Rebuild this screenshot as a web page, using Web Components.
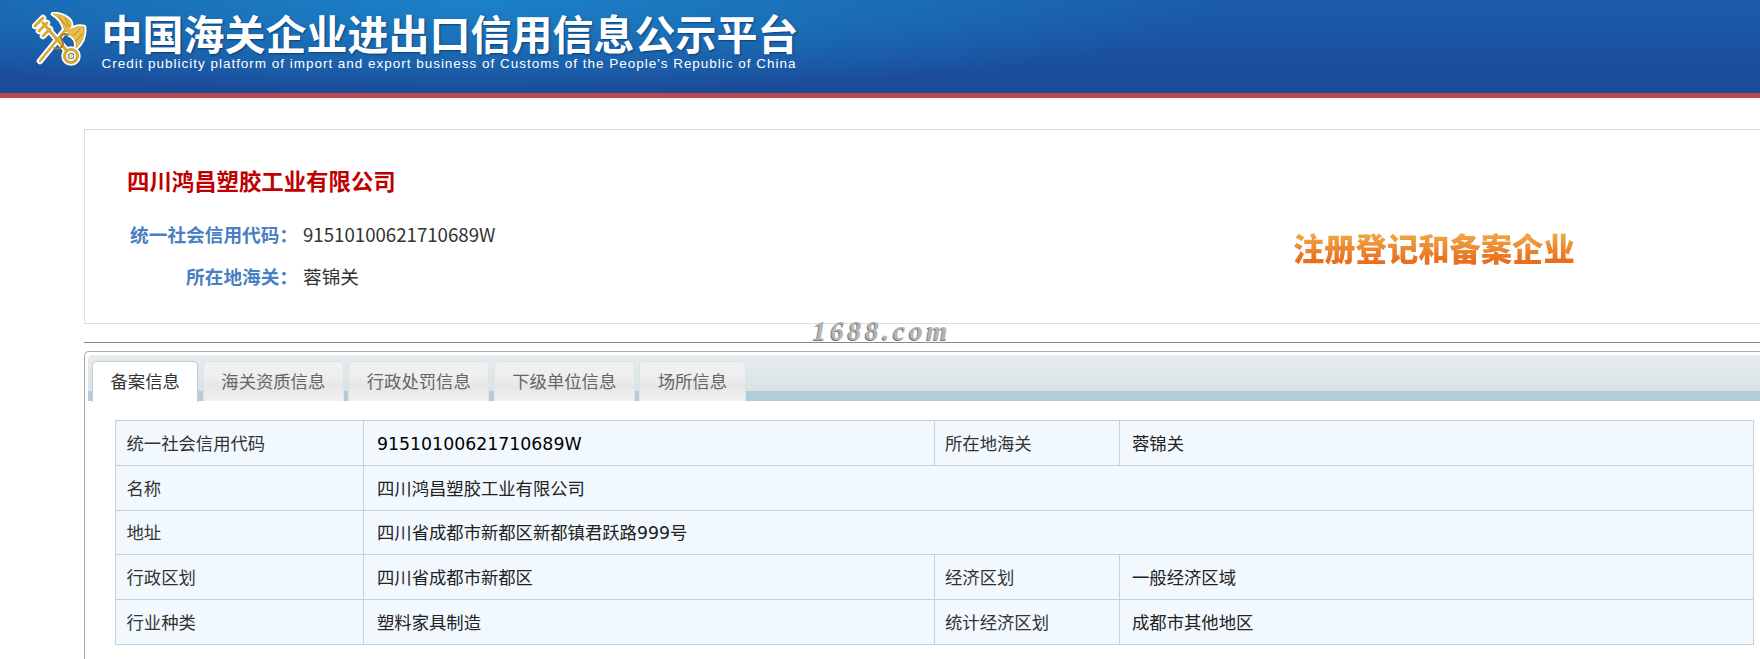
<!DOCTYPE html>
<html lang="zh">
<head>
<meta charset="utf-8">
<title>中国海关企业进出口信用信息公示平台</title>
<style>
  html, body { margin: 0; height: 659px; overflow: hidden; background: #fff; }
  body { font-family: "DejaVu Sans", "Noto Sans CJK SC", sans-serif; }
</style>
</head>
<body>
<site-header></site-header>
<main-area>
  <company-card name="四川鸿昌塑胶工业有限公司" code="91510100621710689W" customs="蓉锦关" status="注册登记和备案企业"></company-card>
  <tab-panel tabs="备案信息,海关资质信息,行政处罚信息,下级单位信息,场所信息">
    <info-table></info-table>
  </tab-panel>
</main-area>

<script>
class SiteHeader extends HTMLElement {
  constructor() {
    super();
    this.attachShadow({ mode: "open" });
    this.shadowRoot.innerHTML = `
      <style>
        :host { display: block; }
        .bar {
          height: 93px;
          box-sizing: border-box;
          display: flex;
          align-items: flex-start;
          padding: 12px 0 0 32px;
          background:
            radial-gradient(ellipse 760px 95px at 470px 0, #1b82c8 0%, rgba(27,120,190,.75) 45%, rgba(27,80,160,0) 100%),
            linear-gradient(#1a5cab, #1b4a98);
        }
        .red { height: 5px; background: #b94a50; }
        svg { width: 56px; height: 56px; flex: none; }
        .titles { margin-left: 13.5px; color: #fff; }
        h1 {
          margin: 0;
          font: 700 41px/41px "Noto Sans CJK SC", sans-serif;
          white-space: nowrap;
          text-shadow: 1px 1px 2px rgba(10,40,90,.7);
        }
        p {
          margin: 4px 0 0;
          font: 13.5px/14px "Liberation Sans", sans-serif;
          letter-spacing: .98px;
          white-space: nowrap;
        }
      </style>
      <div class="bar">
        <svg viewBox="0 0 56 56" fill="none" stroke-linecap="round" stroke-linejoin="round">
          <defs>
            <path id="key" d="M11 11 L35 39"/>
            <path id="teeth" d="M3 14 L11 6 M7 19 L15 11 M11 24 L18 17"/>
            <path id="staff" d="M8 49 L34 17"/>
            <path id="wingl" d="M33 19 C31 11 27 5 21 2 C27 2 34 4 38 9 C40 12 39 16 36 19 Z"/>
            <path id="wingr" d="M37 19 C42 15 48 14 52 15 C53 23 50 31 44 36 C45 29 43 25 36 22 Z"/>
            <path id="snake" d="M22 36 C29 38 33 33 30 29 C27 25 31 20 36 23"/>
          </defs>
          <g stroke="#fff" stroke-width="6.5">
            <use href="#key"/>
            <use href="#teeth"/>
            <use href="#staff"/>
            <use href="#wingl" fill="#fff" stroke-width="4.5"/>
            <use href="#wingr" fill="#fff" stroke-width="4.5"/>
            <circle cx="39" cy="44" r="6.5"/>
          </g>
          <g stroke="#d6a934">
            <use href="#staff" stroke-width="2.4"/>
            <use href="#key" stroke-width="3"/>
            <use href="#teeth" stroke-width="2.8"/>
            <use href="#wingl" fill="#e6bf4c" stroke-width="1"/>
            <use href="#wingr" fill="#e6bf4c" stroke-width="1"/>
            <circle cx="39" cy="44" r="6.5" stroke-width="3"/>
          </g>
          <use href="#snake" stroke="#a97d1f" stroke-width="1.8"/>
          <path d="M27 5 L35 15 M33 6 L37 14 M48 17 L41 24 M50 22 L44 29" stroke="#a97d1f" stroke-width=".9"/>
          <circle cx="39" cy="44" r="2.6" fill="#f3dc88"/>
        </svg>
        <div class="titles">
          <h1>中国海关企业进出口信用信息公示平台</h1>
          <p>Credit publicity platform of import and export business of Customs of the People's Republic of China</p>
        </div>
      </div>
      <div class="red"></div>
    `;
  }
}

class MainArea extends HTMLElement {
  constructor() {
    super();
    this.attachShadow({ mode: "open" });
    this.shadowRoot.innerHTML = `
      <style>
        :host { display: block; padding: 31px 0 0 84px; }
      </style>
      <slot></slot>
    `;
  }
}

class CompanyCard extends HTMLElement {
  constructor() {
    super();
    this.attachShadow({ mode: "open" });
    const name = this.getAttribute("name");
    const code = this.getAttribute("code");
    const customs = this.getAttribute("customs");
    const status = this.getAttribute("status");
    this.shadowRoot.innerHTML = `
      <style>
        :host { display: block; position: relative; font-family: "Noto Sans CJK SC", sans-serif; }
        .card {
          height: 195px;
          box-sizing: border-box;
          border: 1px solid #ddd;
          border-right: 0;
          padding: 34px 0 0 42px;
          display: flex;
          background: #fff;
        }
        .info { width: 1166px; flex: none; }
        h2 { margin: 0 0 16px; font: 700 22.4px/32px "Noto Sans CJK SC", sans-serif; color: #c00000; }
        .row { display: flex; height: 42.5px; align-items: center; font-size: 18.67px; color: #333; }
        .row b { width: 168px; text-align: right; font-weight: 700; color: #4a7fc4; margin-right: 5px; margin-left: 3px; white-space: nowrap; }
        .status {
          margin-top: 59px;
          height: 50px;
          font: 900 31.3px/50px "Noto Sans CJK SC", sans-serif;
          white-space: nowrap;
          color: transparent;
          background: linear-gradient(#f0a445 25%, #e86f1e 75%);
          -webkit-background-clip: text;
          background-clip: text;
        }
        .rule { height: 0; border-top: 1px solid #888; margin-top: 18px; }
        .mark {
          position: absolute;
          left: 729px;
          top: 186px;
          font: italic 700 27px/32px "Liberation Serif", serif;
          letter-spacing: 3.9px;
          color: #b4b4b4;
          text-shadow: -1px 1px 0 #777;
        }
      </style>
      <div class="card">
        <div class="info">
          <h2>${name}</h2>
          <div class="row"><b>统一社会信用代码：</b><span>${code}</span></div>
          <div class="row"><b>所在地海关：</b><span>${customs}</span></div>
        </div>
        <div class="status">${status}</div>
      </div>
      <div class="rule"></div>
      <div class="mark">1688.com</div>
    `;
  }
}

class TabPanel extends HTMLElement {
  constructor() {
    super();
    this.attachShadow({ mode: "open" });
    const tabs = this.getAttribute("tabs").split(",");
    this.shadowRoot.innerHTML = `
      <style>
        :host { display: block; margin-top: 8px; font-size: 17.33px; }
        .panel {
          height: 308px;
          box-sizing: border-box;
          border: 1px solid #aaa;
          border-right: 0;
          border-bottom: 0;
          border-top-left-radius: 5px;
          padding: 3px 0 0 3px;
        }
        .strip {
          display: flex;
          gap: 4.5px;
          height: 46px;
          box-sizing: border-box;
          padding: 6px 0 0 4px;
          border-top-left-radius: 5px;
          background: linear-gradient(#e7ecee 0, #d9e2e6 36px, #b3ccdc 36px);
        }
        .tab {
          height: 40px;
          box-sizing: border-box;
          padding: 0 17.5px;
          line-height: 40px;
          color: #666;
          border: 1px solid #dfe3e5;
          border-bottom: 0;
          border-radius: 5px 5px 0 0;
          background: linear-gradient(#f1f1f1 0, #eeeeee 16px, #e6e6e6 24px, #f1f1f1 100%);
          white-space: nowrap;
        }
        .tab.on {
          height: 41px;
          margin-bottom: -1px;
          background: #fff;
          color: #333;
          border-color: #c4ced4;
          position: relative;
        }
        .body { padding: 19px 0 0 27px; }
      </style>
      <div class="panel">
        <div class="strip">
          ${tabs.map((t, i) => `<div class="tab${i === 0 ? " on" : ""}">${t}</div>`).join("")}
        </div>
        <div class="body"><slot></slot></div>
      </div>
    `;
  }
}

class InfoTable extends HTMLElement {
  constructor() {
    super();
    this.attachShadow({ mode: "open" });
    const rows = [
      ["统一社会信用代码", "91510100621710689W", "所在地海关", "蓉锦关"],
      ["名称", "四川鸿昌塑胶工业有限公司"],
      ["地址", "四川省成都市新都区新都镇君跃路999号"],
      ["行政区划", "四川省成都市新都区", "经济区划", "一般经济区域"],
      ["行业种类", "塑料家具制造", "统计经济区划", "成都市其他地区"]
    ];
    const body = rows.map((r, i) => {
      if (r.length === 2) {
        return `<tr><td>${r[0]}</td><td class="v" colspan="3">${r[1]}</td></tr>`;
      }
      return `<tr><td>${r[0]}</td><td class="v${i === 0 ? " code" : ""}">${r[1]}</td><td class="third">${r[2]}</td><td class="v last">${r[3]}</td></tr>`;
    }).join("");
    this.shadowRoot.innerHTML = `
      <style>
        :host { display: block; }
        table {
          width: 1639px;
          table-layout: fixed;
          border-collapse: collapse;
          background: #f2f9fe;
          color: #333;
          font-size: 17.33px;
        }
        td {
          height: 44.8px;
          box-sizing: border-box;
          padding: 0 0 1px 10.5px;
          border: 1px solid #c4d2da;
          white-space: nowrap;
        }
        td.v { padding-left: 13px; color: #222; }
        td.code { color: #000; padding-top: 3px; padding-bottom: 0; }
        td.third { padding-left: 10px; }
        td.last { padding-left: 12px; }
      </style>
      <table>
        <colgroup><col style="width:248px"><col style="width:571px"><col style="width:185px"><col></colgroup>
        ${body}
      </table>
    `;
  }
}

customElements.define("site-header", SiteHeader);
customElements.define("main-area", MainArea);
customElements.define("company-card", CompanyCard);
customElements.define("tab-panel", TabPanel);
customElements.define("info-table", InfoTable);
</script>
</body>
</html>
